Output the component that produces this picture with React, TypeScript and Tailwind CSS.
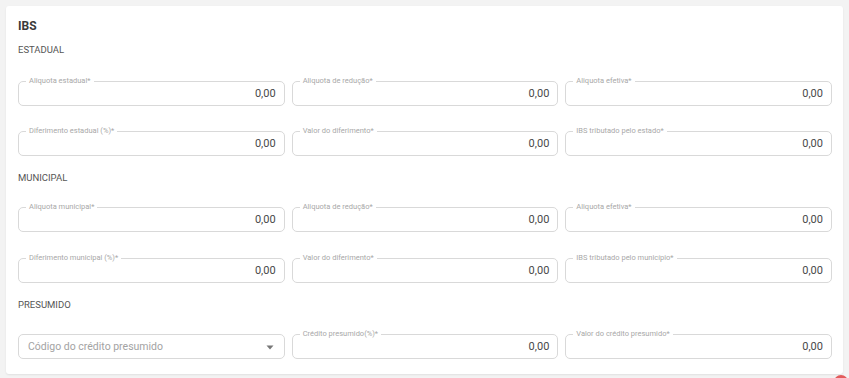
import React from "react";

interface NumberFieldProps {
  label: string;
  value?: string;
}

function NumberField({ label, value = "0,00" }: NumberFieldProps) {
  return (
    <div className="relative h-[25px] rounded-[5px] border border-[#d9d9d9] bg-white">
      <span className="absolute left-[7px] top-[-6px] bg-white px-[3px] text-[7.5px] leading-[10px] text-[#a8a8a8]">
        {label}
      </span>
      <div className="flex h-full items-center justify-end pr-[8px] pt-[1px] text-[11px] text-[#484848]">
        {value}
      </div>
    </div>
  );
}

function SelectField({ placeholder }: { placeholder: string }) {
  return (
    <div className="flex h-[25px] items-center justify-between rounded-[5px] border border-[#d9d9d9] bg-white pl-[9px] pr-[10px]">
      <span className="text-[10.5px] text-[#a3a3a3]">{placeholder}</span>
      <svg width="8" height="5" viewBox="0 0 8 5" className="mt-[1px]">
        <path d="M0.5 0.5 L7.5 0.5 L4 4.5 Z" fill="#777" />
      </svg>
    </div>
  );
}

function Row({ children, className = "" }: { children: React.ReactNode; className?: string }) {
  return <div className={`grid grid-cols-3 gap-[7px] ${className}`}>{children}</div>;
}

export default function App() {
  return (
    <div
      className="relative h-[378px] w-[849px] overflow-hidden bg-[#f3f3f3] pl-[6px] pt-[6px]"
      style={{ fontFamily: "Roboto, 'Liberation Sans', sans-serif" }}
    >
      <div className="h-[368px] w-[837px] rounded-[3px] bg-white pl-[12px] pr-[11px] pt-[12px] shadow-[0_1px_2px_rgba(0,0,0,0.08)]">
        {/* IBS header */}
        <div className="text-[12px] font-bold leading-[16px] text-[#3a3a3a]">IBS</div>

        {/* Estadual */}
        <div className="mt-[9px] text-[9.5px] leading-[14px] text-[#555]">ESTADUAL</div>
        <Row className="mt-[24px]">
          <NumberField label="Aliquota estadual*" />
          <NumberField label="Aliquota de redução*" />
          <NumberField label="Aliquota efetiva*" />
        </Row>
        <Row className="mt-[25px]">
          <NumberField label="Diferimento estadual (%)*" />
          <NumberField label="Valor do diferimento*" />
          <NumberField label="IBS tributado pelo estado*" />
        </Row>

        {/* Municipal */}
        <div className="mt-[15px] text-[9.5px] leading-[14px] text-[#555]">MUNICIPAL</div>
        <Row className="mt-[22px]">
          <NumberField label="Aliquota municipal*" />
          <NumberField label="Aliquota de redução*" />
          <NumberField label="Aliquota efetiva*" />
        </Row>
        <Row className="mt-[26px]">
          <NumberField label="Diferimento municipal (%)*" />
          <NumberField label="Valor do diferimento*" />
          <NumberField label="IBS tributado pelo município*" />
        </Row>

        {/* Presumido */}
        <div className="mt-[15px] text-[9.5px] leading-[14px] text-[#555]">PRESUMIDO</div>
        <Row className="mt-[22px]">
          <SelectField placeholder="Código do crédito presumido" />
          <NumberField label="Crédito presumido(%)*" />
          <NumberField label="Valor do crédito presumido*" />
        </Row>
      </div>

      {/* floating button peeking in at the corner */}
      <div className="absolute left-[834px] top-[375px] h-[14px] w-[14px] rounded-full bg-[#e25c5c]" />
    </div>
  );
}
